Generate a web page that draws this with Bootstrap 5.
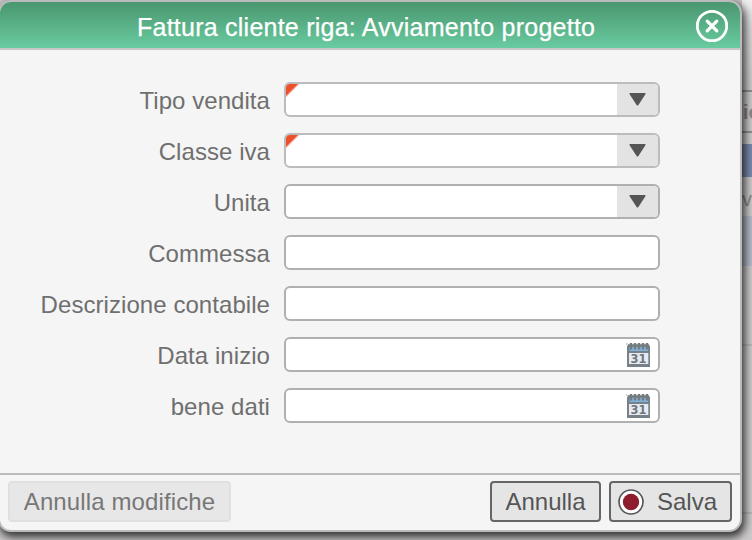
<!DOCTYPE html>
<html lang="it">
<head>
<meta charset="utf-8">
<title>Fattura cliente riga</title>
<link href="https://cdn.jsdelivr.net/npm/bootstrap@5.3.0/dist/css/bootstrap.min.css" rel="stylesheet">
<style>
body{width:752px;height:540px;background:#c8c6c7;font-family:"Liberation Sans",Arial,sans-serif;font-size:24px;line-height:30px;color:#6f6f6f}
.backdrop-page{left:742px;top:0;width:10px;height:540px;background:linear-gradient(#efefef 0,#d8d6d7 30px,#cbc9ca 84px);font-size:20px;font-weight:700;color:#8a8889}
.backdrop-page>div{left:0;width:10px}
.rule-a{top:90px;height:43px;border:solid #908e8f;border-width:2px 0}
.head-text{top:97px;text-indent:1px}
.row-blue{top:144px;height:33px;background:#7889ac}
.cell-text{top:184px}
.row-pale{top:216px;height:50px;background:#b4bac8}
.rule-b{top:344px;height:2px;background:#b8b6b7}
.rule-c{top:512px;height:2px;background:#b8b6b7}
.dialog{width:744px;height:532px;margin-left:-2px;background:#f5f5f5;border:2px solid #bbb;border-radius:13px;box-shadow:2px 4px 9px 1px rgba(0,0,0,.75)}
.titlebar{height:48px;background:linear-gradient(#4a966f,#69cba0);border-bottom:2px solid #c6c8c7;border-radius:11px 11px 0 0;color:#fff}
.title-text{margin-left:137px;padding-top:4px;font-size:25px;letter-spacing:.24px;white-space:nowrap;-webkit-text-stroke:.25px #fff}
.close-icon{margin:2px 11px 0 auto}
.form-area{height:423px;padding-top:32px;gap:16px}
.lbl{width:270px;margin-right:14px;padding-top:2px;line-height:33px;letter-spacing:.06px}
.field{width:376px;height:35px;background:#fff;border:2px solid #b0b0b0;border-radius:6px}
.required{border-color:#bcbcbc}
.required::before{content:"";width:13px;height:13px;background:linear-gradient(135deg,#ec4f2b 0 42%,transparent 54%)}
.drop{width:41px;background:#e3e3e3}
.drop svg{margin-top:9px}
.cal{margin:3px 8px 0 auto}
.footer-bar{height:57px;border-top:2px solid #bbb;padding:6px 8px 8px}
.tool{height:41px;padding:0;border:2px solid #666;border-radius:4px;background:#e5e5e5;color:#555;font-size:24px;line-height:36px}
.tool.off{width:223px;border-color:#e0e0e0;background:#e7e7e7;color:#777;letter-spacing:.12px}
.tool.cancel{width:111px}
.tool.save{width:123px}
.save svg{margin:0 13px 0 7px}
</style>
<script src="https://cdn.jsdelivr.net/npm/bootstrap@5.3.0/dist/js/bootstrap.bundle.min.js"></script>
</head>
<body class="overflow-hidden position-relative">
<div class="backdrop-page position-absolute overflow-hidden">
  <div class="position-absolute rule-a"></div>
  <div class="position-absolute head-text">ic</div>
  <div class="position-absolute row-blue"></div>
  <div class="position-absolute fw-normal cell-text">v</div>
  <div class="position-absolute row-pale"></div>
  <div class="position-absolute rule-b"></div>
  <div class="position-absolute rule-c"></div>
</div>
<svg width="0" height="0" class="position-absolute">
  <symbol id="arrow" viewBox="0 0 17 13"><path d="M1.2 0h14.6q1.4 0 .6 1.2L9.4 12q-.9 1.2-1.8 0L.6 1.2Q-.2 0 1.2 0z" fill="#555"/></symbol>
  <symbol id="calendar" viewBox="0 0 24 25">
    <path d="M1 3.5h23V25H1z" fill="#77818a"/><path d="M3.5 4h18.5v5H3.500z" fill="#80b2df"/><path d="M3 11h19.300v11H3z" fill="#e8e9f1"/>
    <path d="M0 1h1.500v2H0z" fill="#ccc"/>
    <path d="M5 1v6.500M9 1v6.500M13 1v6.500M17 1v6.500M21 1v6.500" stroke="#737b7e" stroke-width="2.400"/><path d="M2 3.500h21" stroke="#737b7e" stroke-width="2.500"/>
  </symbol>
</svg>
<main class="dialog position-relative">
  <header class="titlebar d-flex align-items-center">
    <span class="title-text">Fattura cliente riga: Avviamento progetto</span>
    <svg class="close-icon" width="34" height="34" viewBox="0 0 34 34" fill="none" stroke="#fff"><circle cx="17" cy="17" r="14.700" stroke-width="2.800"/><path d="m12.200 12.200 9.600 9.600m0-9.600-9.600 9.600" stroke-width="3.200" stroke-linecap="round"/></svg>
  </header>
  <section class="form-area d-flex flex-column">
    <div class="d-flex"><label class="lbl text-end">Tipo vendita</label><div class="field required d-flex overflow-hidden"><div class="drop ms-auto d-flex justify-content-center"><svg width="17" height="13"><use href="#arrow"/></svg></div></div></div>
    <div class="d-flex"><label class="lbl text-end">Classe iva</label><div class="field required d-flex overflow-hidden"><div class="drop ms-auto d-flex justify-content-center"><svg width="17" height="13"><use href="#arrow"/></svg></div></div></div>
    <div class="d-flex"><label class="lbl text-end">Unita</label><div class="field d-flex overflow-hidden"><div class="drop ms-auto d-flex justify-content-center"><svg width="17" height="13"><use href="#arrow"/></svg></div></div></div>
    <div class="d-flex"><label class="lbl text-end">Commessa</label><div class="field"></div></div>
    <div class="d-flex"><label class="lbl text-end">Descrizione contabile</label><div class="field"></div></div>
    <div class="d-flex"><label class="lbl text-end">Data inizio</label><div class="field d-flex"><svg class="cal" width="24" height="25"><use href="#calendar"/><text x="12.500" y="21" text-anchor="middle" font-family="DejaVu Sans" font-weight="700" font-size="12" textLength="16" lengthAdjust="spacingAndGlyphs" fill="#6e777e">31</text></svg></div></div>
    <div class="d-flex"><label class="lbl text-end">bene dati</label><div class="field d-flex"><svg class="cal" width="24" height="25"><use href="#calendar"/><text x="12.500" y="21" text-anchor="middle" font-family="DejaVu Sans" font-weight="700" font-size="12" textLength="16" lengthAdjust="spacingAndGlyphs" fill="#6e777e">31</text></svg></div></div>
  </section>
  <footer class="footer-bar d-flex gap-2">
    <button class="tool off" disabled>Annulla modifiche</button>
    <button class="tool cancel ms-auto">Annulla</button>
    <button class="tool save d-flex align-items-center"><svg width="26" height="26" viewBox="0 0 26 26"><circle cx="13" cy="13" r="12" fill="#fff" stroke="#555" stroke-width="1.700"/><circle cx="13" cy="13" r="8.200" fill="#8d1c2d"/></svg>Salva</button>
  </footer>
</main>
</body>
</html>
